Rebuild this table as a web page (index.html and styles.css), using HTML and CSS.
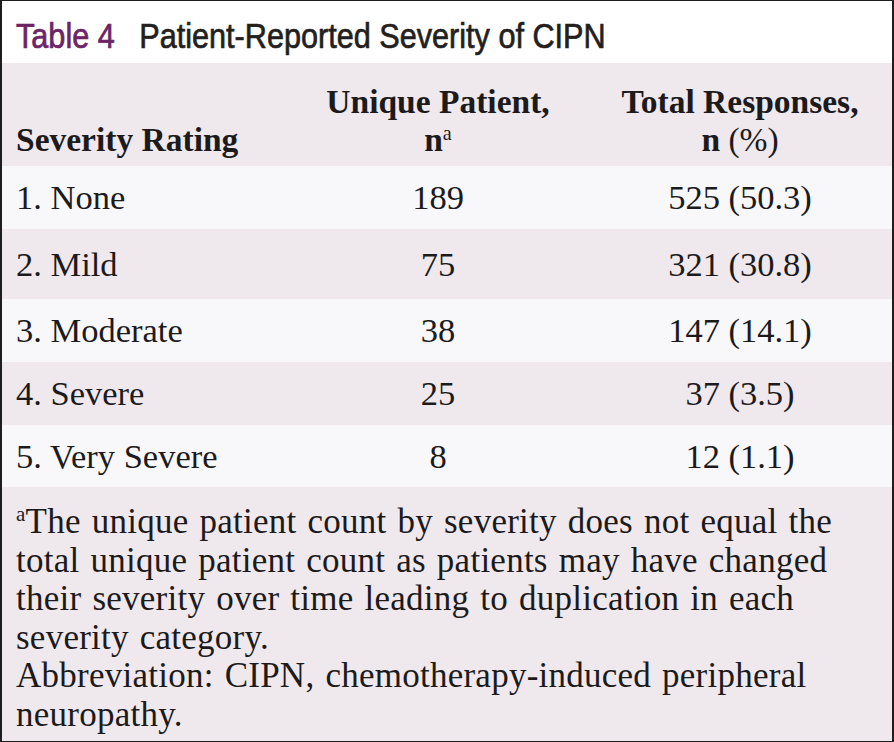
FILE: index.html
```html
<!DOCTYPE html>
<html>
<head>
<meta charset="utf-8">
<link rel="stylesheet" href="styles.css">
</head>
<body>
<div class="frame">
  <div class="title"><div class="title-inner"><span class="label">Table 4</span><span class="caption">Patient-Reported Severity of CIPN</span></div></div>
  <div class="row head">
    <div class="c1">Severity Rating</div>
    <div class="c2">Unique Patient,<br>n<sup>a</sup></div>
    <div class="c3">Total Responses,<br>n <span class="reg">(%)</span></div>
  </div>
  <div class="row light r63">
    <div class="c1">1. None</div><div class="c2">189</div><div class="c3">525 (50.3)</div>
  </div>
  <div class="row pink r70">
    <div class="c1">2. Mild</div><div class="c2">75</div><div class="c3">321 (30.8)</div>
  </div>
  <div class="row light r63">
    <div class="c1">3. Moderate</div><div class="c2">38</div><div class="c3">147 (14.1)</div>
  </div>
  <div class="row pink r63">
    <div class="c1">4. Severe</div><div class="c2">25</div><div class="c3">37 (3.5)</div>
  </div>
  <div class="row light r62">
    <div class="c1">5. Very Severe</div><div class="c2">8</div><div class="c3">12 (1.1)</div>
  </div>
  <div class="foot">
    <p><sup>a</sup>The unique patient count by severity does not equal the<br>total unique patient count as patients may have changed<br>their severity over time leading to duplication in each<br>severity category.</p>
    <p>Abbreviation: CIPN, chemotherapy-induced peripheral<br>neuropathy.</p>
  </div>
</div>
</body>
</html>
```
FILE: styles.css
```css
html, body {
  margin: 0;
  padding: 0;
  background: #ffffff;
}
.frame {
  width: 894px;
  height: 742px;
  box-sizing: border-box;
  border-top: 1px solid #1e1e1e;
  border-left: 2px solid #1e1e1e;
  border-right: 2px solid #1e1e1e;
  border-bottom: 1px solid #1e1e1e;
  display: flex;
  flex-direction: column;
  font-family: "Liberation Serif", "Times New Roman", serif;
  color: #1c1a1b;
  overflow: hidden;
}
.title {
  height: 62px;
  background: #ffffff;
  display: flex;
  align-items: flex-end;
  padding: 0 0 10px 14px;
  box-sizing: border-box;
  font-family: "Liberation Sans", Arial, sans-serif;
  font-size: 35px;
  line-height: 1;
  white-space: nowrap;
}
.title-inner {
  transform: scaleX(0.875);
  transform-origin: left bottom;
  -webkit-text-stroke: 0.7px currentColor;
}
.label {
  color: #6d2466;
  margin-right: 28px;
}
.caption {
  color: #231f20;
}
.row {
  display: grid;
  grid-template-columns: 286px 300px 1fr;
  align-items: center;
  font-size: 34.5px;
}
.c1 {
  padding-left: 14px;
}
.c2, .c3 {
  text-align: center;
}
.head {
  height: 103px;
  background: #efe9ee;
  font-weight: bold;
  font-size: 33.5px;
  line-height: 38px;
  align-items: end;
  padding-bottom: 7px;
  box-sizing: border-box;
}
.head sup, .foot sup {
  font-size: 0.6em;
  font-weight: normal;
  vertical-align: 0.55em;
  line-height: 0;
}
.reg {
  font-weight: normal;
}
.light { background: #f8f8fb; }
.pink { background: #efe9ee; }
.r63 { height: 63px; }
.r70 { height: 70px; }
.r62 { height: 62px; }
.foot {
  flex: 1;
  background: #efe9ee;
  padding: 16px 14px 0 14px;
  font-size: 35px;
  line-height: 38.5px;
  letter-spacing: 0.25px;
  word-spacing: 2px;
  white-space: nowrap;
}
.foot p {
  margin: 0;
}
```
